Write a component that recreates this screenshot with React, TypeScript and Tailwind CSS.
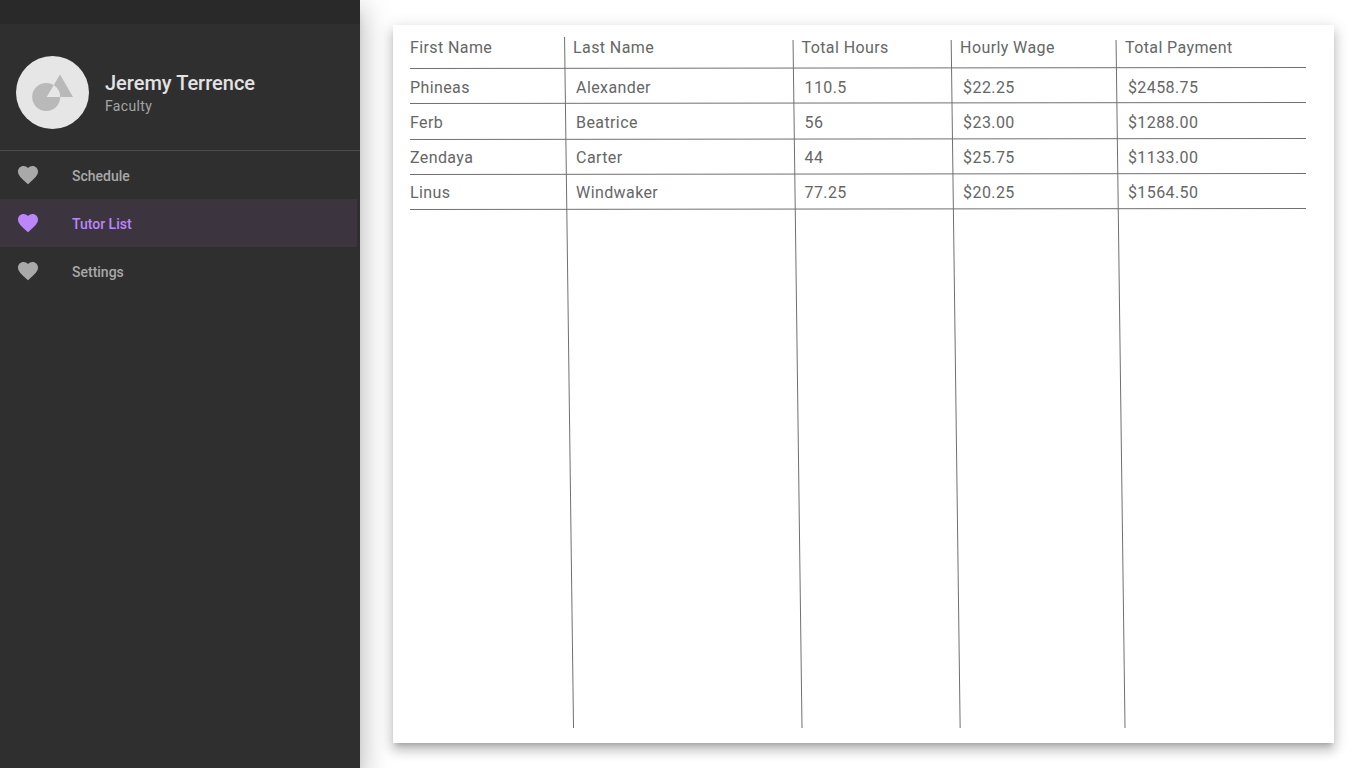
import { MdFavorite } from "react-icons/md";

const navItems = [
  { label: "Schedule", active: false },
  { label: "Tutor List", active: true },
  { label: "Settings", active: false },
];

const columns = [
  { label: "First Name", width: "w-[18.2%]" },
  { label: "Last Name", width: "w-[25.5%]" },
  { label: "Total Hours", width: "w-[17.7%]" },
  { label: "Hourly Wage", width: "w-[18.4%]" },
  { label: "Total Payment", width: "w-[20.2%]" },
];

const tutors = [
  ["Phineas", "Alexander", "110.5", "$22.25", "$2458.75"],
  ["Ferb", "Beatrice", "56", "$23.00", "$1288.00"],
  ["Zendaya", "Carter", "44", "$25.75", "$1133.00"],
  ["Linus", "Windwaker", "77.25", "$20.25", "$1564.50"],
];

// Hand-ruled sheet lines: each one leans slightly off its axis.
const rowRules = [43, 78, 114, 149, 184];
const columnRules = [
  { from: "17.25%", to: "18.25%", top: 12 },
  { from: "42.75%", to: "43.75%", top: 15 },
  { from: "60.4%", to: "61.4%", top: 15 },
  { from: "78.8%", to: "79.8%", top: 15 },
];

function Avatar() {
  return (
    <svg viewBox="0 0 73 73" className="size-[73px] shrink-0" role="img" aria-label="Profile picture">
      <circle cx="36.5" cy="36.5" r="36.5" fill="#e6e6e6" />
      <path
        fillRule="evenodd"
        fill="#b9b9b9"
        d="M44 18.5 57 41H30.7ZM30.2 27a14 14 0 1 0 0 28a14 14 0 1 0 0-28Z"
      />
    </svg>
  );
}

function Sidebar() {
  return (
    <aside className="relative z-10 w-[360px] shrink-0 bg-[#2f2f2f] shadow-[0_8px_10px_-5px_rgba(0,0,0,0.2),0_16px_24px_2px_rgba(0,0,0,0.14),0_6px_30px_5px_rgba(0,0,0,0.12)]">
      <div className="h-6 bg-[#292929]" />
      <header className="flex h-[127px] items-center gap-4 border-b border-[#4c4c4c] px-4 pt-2.5">
        <Avatar />
        <div className="pt-1">
          <h1 className="text-xl leading-6 font-medium text-[#e3e3e3]">Jeremy Terrence</h1>
          <p className="text-sm leading-[22px] tracking-wide text-[#a5a5a5]">Faculty</p>
        </div>
      </header>
      <nav className="pr-[3px]">
        {navItems.map((item) => (
          <a
            key={item.label}
            href="#"
            aria-current={item.active ? "page" : undefined}
            className={
              item.active
                ? "flex h-12 items-center gap-8 bg-[#3c3540] px-4 text-[#bb86fc]"
                : "flex h-12 items-center gap-8 px-4 text-[#a9a9a9]"
            }
          >
            <MdFavorite className="size-6" aria-hidden="true" />
            <span className="pt-0.5 text-sm leading-5 font-medium">{item.label}</span>
          </a>
        ))}
      </nav>
    </aside>
  );
}

function SheetRules() {
  return (
    <svg className="pointer-events-none absolute inset-0 size-full" stroke="#707070" strokeWidth="1" aria-hidden="true">
      {rowRules.map((y) => (
        <line key={y} x1="0" y1={y + 0.5} x2="100%" y2={y - 0.5} />
      ))}
      {columnRules.map((rule) => (
        <line key={rule.from} x1={rule.from} y1={rule.top} x2={rule.to} y2="100%" />
      ))}
    </svg>
  );
}

export default function App() {
  return (
    <div className="flex min-h-screen bg-white font-['Roboto',sans-serif]">
      <Sidebar />
      <main className="flex grow pt-[25px] pr-8 pb-[25px] pl-[33px]">
        <section className="grow bg-white pr-7 pb-[15px] pl-[17px] shadow-[0_5px_5px_-3px_rgba(0,0,0,0.2),0_8px_10px_1px_rgba(0,0,0,0.14),0_3px_14px_2px_rgba(0,0,0,0.12)]">
          <div className="relative h-full">
            <table className="w-full table-fixed text-left text-base leading-6 tracking-wide text-[#666666]">
              <thead>
                <tr className="h-[45px]">
                  {columns.map((column) => (
                    <th key={column.label} scope="col" className={`${column.width} p-0 font-normal`}>
                      {column.label}
                    </th>
                  ))}
                </tr>
              </thead>
              <tbody>
                {tutors.map((row) => (
                  <tr key={row[0]} className="h-[35px]">
                    {row.map((cell, i) => (
                      <td key={columns[i].label} className={i === 0 ? "p-0" : "py-0 pr-0 pl-[3px]"}>
                        {cell}
                      </td>
                    ))}
                  </tr>
                ))}
              </tbody>
            </table>
            <SheetRules />
          </div>
        </section>
      </main>
    </div>
  );
}
